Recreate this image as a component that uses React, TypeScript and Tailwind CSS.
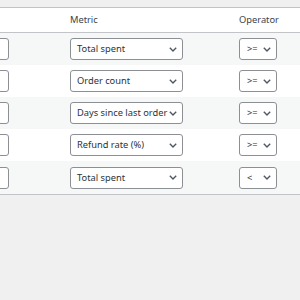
import React from "react";

const rows = [
  { metric: "Total spent", op: ">=" },
  { metric: "Order count", op: ">=" },
  { metric: "Days since last order", op: ">=" },
  { metric: "Refund rate (%)", op: ">=" },
  { metric: "Total spent", op: "<" },
];

function Chevron() {
  return (
    <svg width="8" height="5" viewBox="0 0 8 5" className="shrink-0">
      <polyline points="0.8,0.8 4,4 7.2,0.8" fill="none" stroke="#50575e" strokeWidth="1.4" />
    </svg>
  );
}

function Select({ label, width, pl }: { label: string; width: string; pl: string }) {
  return (
    <div
      className={`${width} ${pl} h-[22px] flex items-center justify-between gap-[2px] pr-[5px] bg-white border border-[#8c8f94] rounded-[3px] text-[9.3px] text-[#2c3338] whitespace-nowrap overflow-hidden`}
    >
      <span>{label}</span>
      <Chevron />
    </div>
  );
}

export default function App() {
  return (
    <div
      className="w-[300px] h-[300px] bg-[#f0f0f1] overflow-hidden pt-[7px]"
      style={{ fontFamily: '"Noto Sans", "Open Sans", sans-serif' }}
    >
      <div className="ml-[-100px] w-[500px] bg-white border-y border-[#c3c4c7]">
        <div className="flex h-[25px] items-center border-b border-[#c3c4c7] text-[9.3px] text-[#3c434a]">
          <div className="w-[162px]" />
          <div className="w-[169px] pl-[8px]">Metric</div>
          <div className="pl-[8px]">Operator</div>
        </div>
        {rows.map((r, i) => (
          <div
            key={i}
            className={`flex ${i === 4 ? "h-[33px]" : "h-[32px]"} items-center ${i % 2 === 0 ? "bg-[#f6f7f7]" : "bg-white"}`}
          >
            <div className="w-[162px] pl-[8px]">
              <div className="w-[101px] h-[22px] bg-white border border-[#8c8f94] rounded-[3px]" />
            </div>
            <div className="w-[169px] pl-[8px]">
              <Select label={r.metric} width="w-[113px]" pl="pl-[6px]" />
            </div>
            <div className="pl-[8px]">
              <Select label={r.op} width="w-[38px]" pl="pl-[7px]" />
            </div>
          </div>
        ))}
      </div>
    </div>
  );
}
